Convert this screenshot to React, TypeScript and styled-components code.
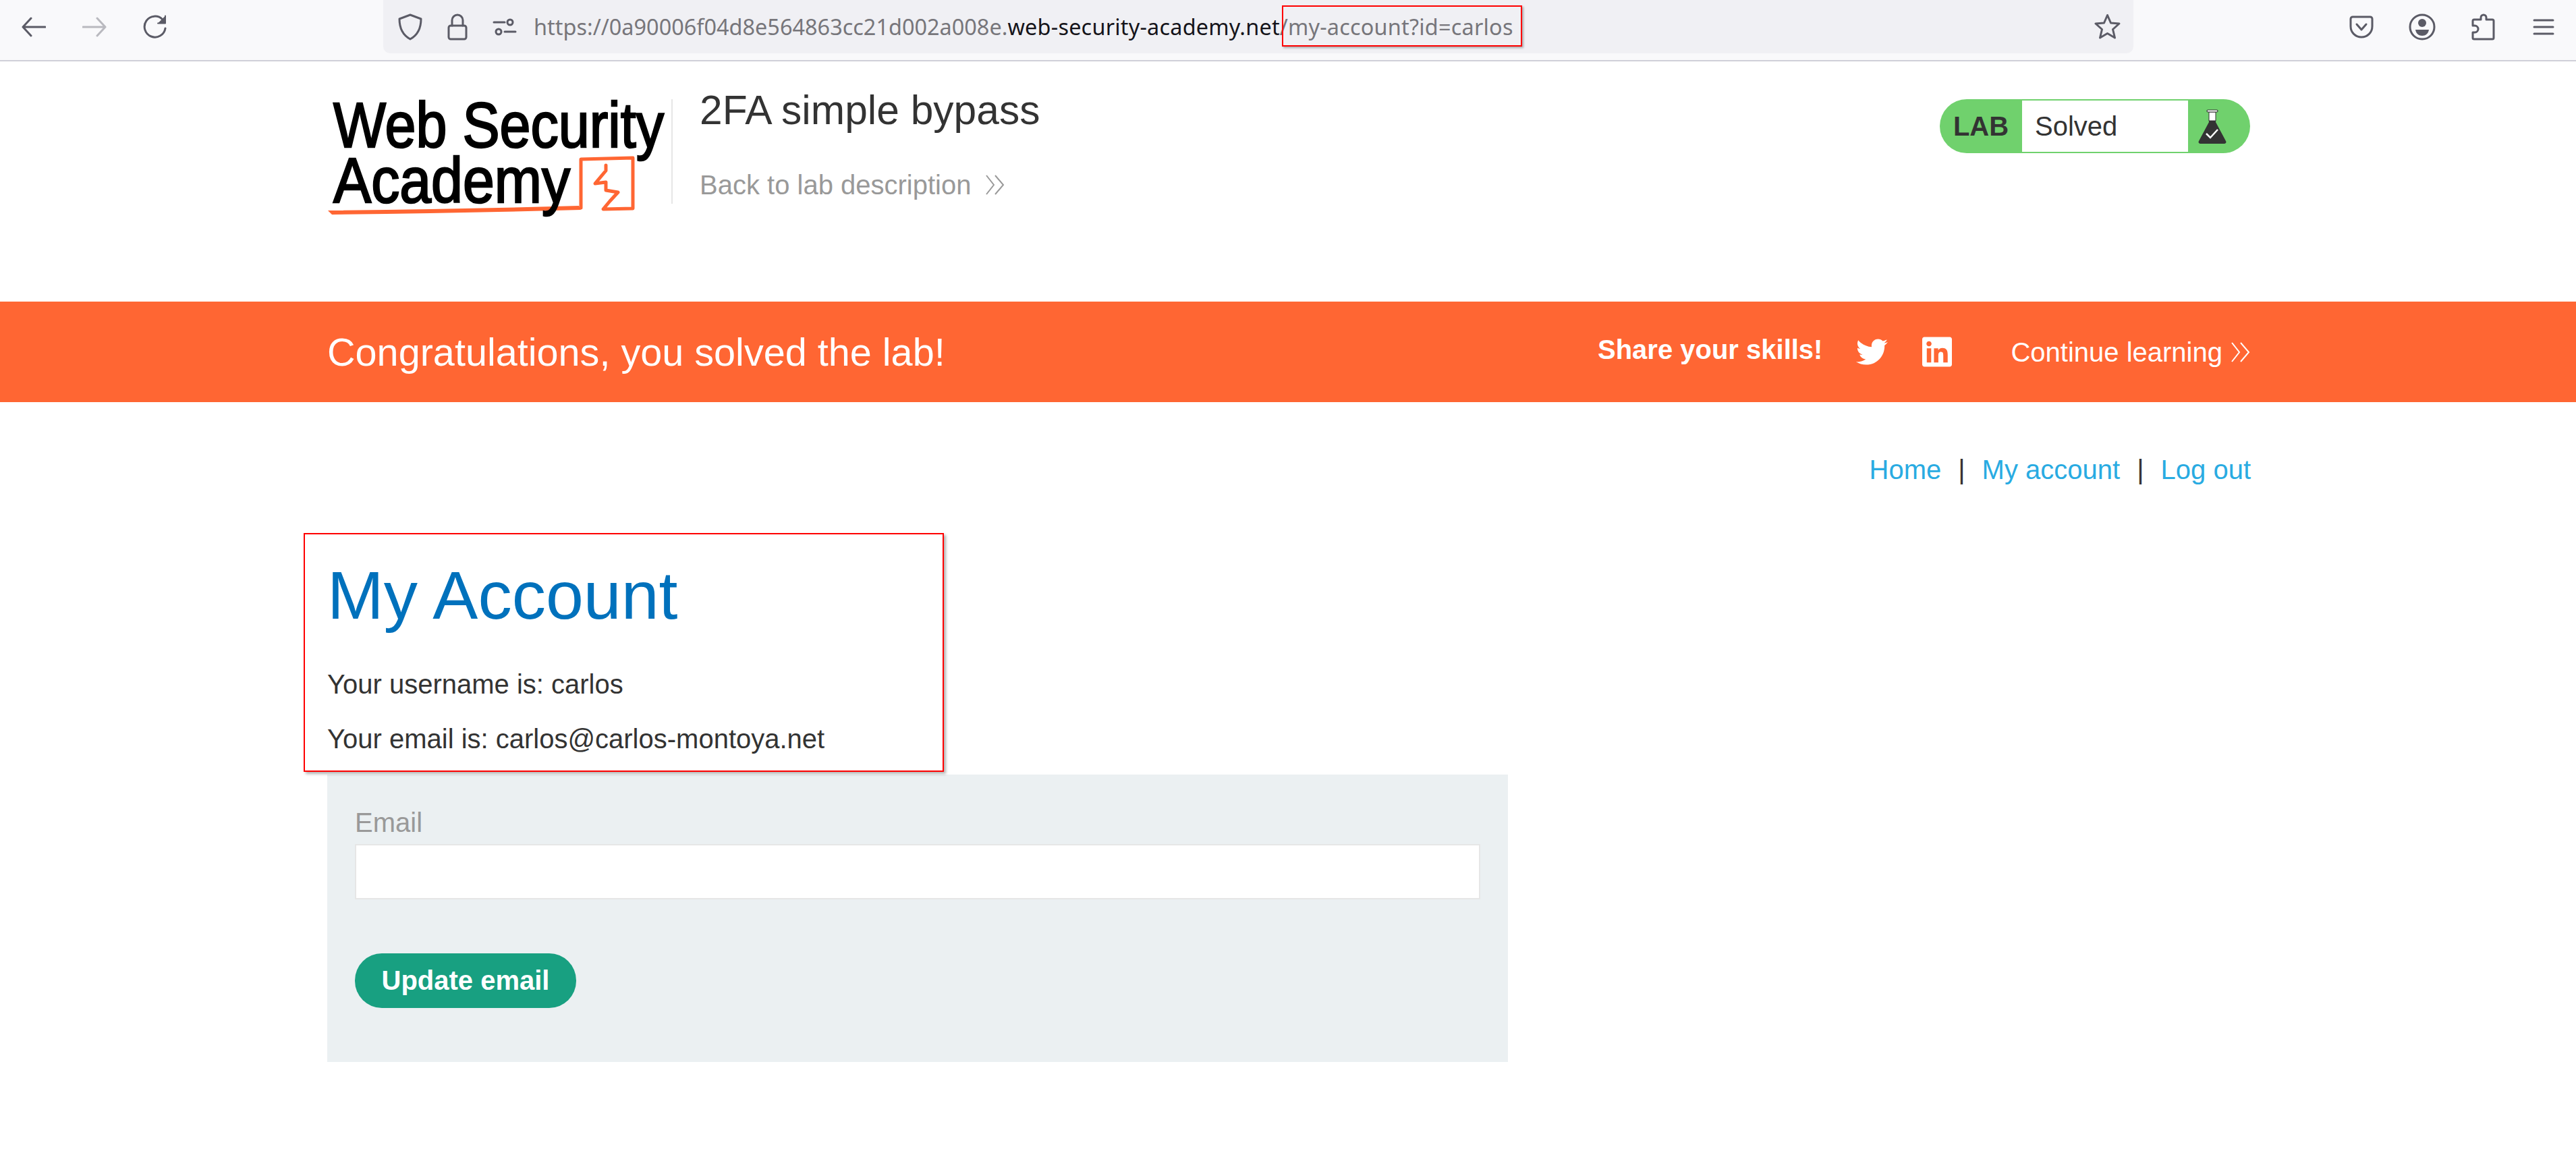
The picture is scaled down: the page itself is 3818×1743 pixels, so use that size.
import React from "react";
import styled, { createGlobalStyle } from "styled-components";
import { FaTwitter, FaLinkedin } from "react-icons/fa";

const GlobalStyle = createGlobalStyle`
  html, body {
    margin: 0;
    padding: 0;
    background: #fff;
    font-family: "Liberation Sans", Arial, sans-serif;
    font-size: 40px;
    line-height: 48px;
    color: #333;
  }
`;

const Toolbar = styled.div`
  height: 89px;
  background: #f9f9fb;
  border-bottom: 2px solid #cfcfd8;
  display: flex;
  align-items: flex-start;
  padding-left: 5px;
`;

const ToolGroup = styled.div`
  display: flex;
  height: 79px;
  align-items: center;
`;

const ToolButton = styled.div`
  width: 90px;
  height: 79px;
  display: flex;
  align-items: center;
  justify-content: center;
`;

const UrlBar = styled.div`
  width: 2594px;
  height: 79px;
  margin-left: 293px;
  margin-right: 293px;
  background: #f0f0f4;
  border-radius: 0 0 10px 10px;
  display: flex;
  align-items: center;
  padding-left: 22px;
  box-sizing: border-box;
`;

const UrlIcons = styled.div`
  display: flex;
  align-items: center;
  gap: 37px;
`;

const UrlText = styled.div`
  margin-left: 25px;
  font-family: "Noto Sans", sans-serif;
  font-size: 32.45px;
  line-height: 40px;
  color: #77767b;
  white-space: nowrap;
  flex: 1;
`;

const Domain = styled.span`
  color: #15141a;
  letter-spacing: 0.2px;
`;

const Highlighted = styled.span`
  position: relative;
  letter-spacing: 0.2px;
  &::after {
    content: "";
    position: absolute;
    left: -9px;
    right: -13px;
    top: -9px;
    bottom: -7px;
    border: 2.5px solid #f00;
    box-shadow: 2px 2px 3px rgba(0, 0, 0, 0.3);
  }
`;

const StarSlot = styled.div`
  width: 39px;
  height: 39px;
  margin-right: 19px;
`;

const LabHeader = styled.header`
  height: 356px;
  box-sizing: border-box;
  padding: 37px 483px 0 485px;
  display: flex;
  align-items: flex-start;
`;

const Logo = styled.svg`
  display: block;
  margin-top: 12px;
  flex-shrink: 0;
  overflow: visible;
`;

const LogoDivider = styled.div`
  width: 2px;
  height: 155px;
  margin: 19px 40px 0 5px;
  background: #e6e6e6;
`;

const LabTitle = styled.div`
  display: flex;
  flex-direction: column;
`;

const LabName = styled.h2`
  margin: 0 0 52px;
  font-size: 60.5px;
  line-height: 70px;
  font-weight: 400;
  color: #333;
`;

const BackLink = styled.a`
  display: flex;
  align-items: center;
  gap: 22px;
  color: #999;
`;

const StatusPill = styled.div`
  margin: 19px 0 0 auto;
  width: 460px;
  height: 80px;
  box-sizing: border-box;
  border-radius: 40px;
  background: #70d16d;
  display: flex;
  align-items: stretch;
  padding: 2px 0;
`;

const StatusLabel = styled.div`
  width: 122px;
  display: flex;
  align-items: center;
  justify-content: center;
  font-weight: 700;
`;

const StatusValue = styled.div`
  width: 246px;
  background: #fff;
  display: flex;
  align-items: center;
  padding-left: 19px;
  box-sizing: border-box;
`;

const StatusIcon = styled.div`
  flex: 1;
  display: flex;
  align-items: center;
  justify-content: center;
  padding-right: 20px;
`;

const Banner = styled.section`
  height: 149px;
  box-sizing: border-box;
  padding: 0 483px 0 485px;
  background: #ff6633;
  color: #fff;
  display: flex;
  align-items: center;
`;

const BannerTitle = styled.h4`
  margin: 0;
  font-size: 57.6px;
  line-height: 70px;
  font-weight: 400;
  flex: 1;
`;

const ShareLabel = styled.span`
  font-weight: 700;
  margin: 0 50px 8px 0;
`;

const ShareIcon = styled.a<{ $gap: number }>`
  display: flex;
  color: #fff;
  margin-right: ${(p) => p.$gap}px;
`;

const LinkedinGlyph = styled(FaLinkedin)`
  width: 44px;
  height: 51px;
`;

const ContinueLink = styled.a`
  display: flex;
  align-items: center;
  gap: 13px;
  color: #fff;
`;

const TopNav = styled.nav`
  margin: 76px 482px 0 485px;
  display: flex;
  justify-content: flex-end;
`;

const NavLink = styled.a`
  color: #29abe2;
`;

const NavSep = styled.span`
  margin: 0 25px;
  color: #333;
`;

const Main = styled.main`
  position: relative;
  margin: 0 483px 0 485px;
  padding-top: 102px;
`;

const Heading = styled.h1`
  margin: 0 0 48px;
  font-size: 100.5px;
  line-height: 120px;
  font-weight: 400;
  color: #0071bc;
`;

const InfoLine = styled.p<{ $space: number }>`
  margin: 0 0 ${(p) => p.$space}px;
`;

const CalloutBox = styled.div`
  position: absolute;
  left: -35px;
  top: 70px;
  width: 949px;
  height: 354px;
  box-sizing: border-box;
  border: 2.5px solid #f00;
  box-shadow: 3px 3px 4px rgba(0, 0, 0, 0.3);
`;

const EmailForm = styled.form`
  width: 1750px;
  height: 426px;
  box-sizing: border-box;
  padding: 47px 41px 0;
  background: #ebf0f2;
`;

const FieldLabel = styled.label`
  display: block;
  color: #999;
  margin-bottom: 8px;
`;

const TextField = styled.input`
  display: block;
  width: 100%;
  height: 82px;
  box-sizing: border-box;
  border: 2px solid #e6e6e6;
  background: #fff;
  margin-bottom: 80px;
`;

const SubmitButton = styled.button`
  display: block;
  width: 328px;
  height: 81px;
  border: 0;
  border-radius: 40px;
  background: #18a081;
  color: #fff;
  font-family: inherit;
  font-size: 40px;
  font-weight: 700;
  padding: 0;
`;

const Ico = ({ w, h, children, sw = 3, color = "#5b5b66" }: { w: number; h: number; children: React.ReactNode; sw?: number; color?: string }) => (
  <svg width={w} height={h} viewBox={`0 0 ${w} ${h}`} fill="none" stroke={color} strokeWidth={sw} strokeLinecap="round" strokeLinejoin="round">
    {children}
  </svg>
);

const DoubleChevron = ({ color, sw = 2 }: { color: string; sw?: number }) => (
  <svg width="28" height="30" viewBox="0 0 28 30" fill="none" stroke={color} strokeWidth={sw}>
    <polyline points="1,1 12,15 1,29" />
    <polyline points="14,1 26,15 14,29" />
  </svg>
);

const App = () => (
  <>
    <GlobalStyle />
    <Toolbar>
      <ToolGroup>
        <ToolButton>
          <Ico w={36} h={30}>
            <path d="M14 2 2 15l12 13M2 15h33" />
          </Ico>
        </ToolButton>
        <ToolButton>
          <Ico w={36} h={30} color="#b9b9bf">
            <path d="M22 2l12 13-12 13M34 15H1" />
          </Ico>
        </ToolButton>
        <ToolButton>
          <Ico w={36} h={36}>
            <path d="M33 20a15.5 15.5 0 1 1-4-13" />
            <path d="M33 1.5v11H22" fill="#5b5b66" strokeWidth={2} />
          </Ico>
        </ToolButton>
      </ToolGroup>
      <UrlBar>
        <UrlIcons>
          <Ico w={36} h={40}>
            <path d="M18 2 34 8c0 14-5 24-16 30C7 32 2 22 2 8z" />
          </Ico>
          <Ico w={30} h={40}>
            <rect x="2" y="18" width="26" height="20" rx="3" />
            <path d="M7 18V10a8 8 0 0 1 16 0v8" />
          </Ico>
          <Ico w={36} h={26}>
            <circle cx="26" cy="6" r="4" />
            <path d="M2 6h16M18 20h16" />
            <circle cx="9" cy="20" r="4" />
          </Ico>
        </UrlIcons>
        <UrlText>
          https://0a90006f04d8e564863cc21d002a008e.<Domain>web-security-academy.net</Domain>/
          <Highlighted>my-account?id=carlos</Highlighted>
        </UrlText>
        <StarSlot>
          <Ico w={39} h={39}>
            <path d="M19.5 2.5l5 11.5 12.5 1-9.5 8.5 3 12.5-11-6.5-11 6.5 3-12.5L2 15l12.5-1z" />
          </Ico>
        </StarSlot>
      </UrlBar>
      <ToolGroup>
        <ToolButton>
          <Ico w={36} h={34}>
            <path d="M5 2h26a3 3 0 0 1 3 3v11c0 9-7 16-16 16S2 25 2 16V5a3 3 0 0 1 3-3z" />
            <path d="M11 13l7 8 7-8" />
          </Ico>
        </ToolButton>
        <ToolButton>
          <Ico w={40} h={40}>
            <circle cx="20" cy="20" r="18" />
            <circle cx="20" cy="14" r="6" fill="#5b5b66" stroke="none" />
            <path d="M10 24h20c-1 6-5 9-10 9s-9-3-10-9z" fill="#5b5b66" stroke="none" />
          </Ico>
        </ToolButton>
        <ToolButton>
          <Ico w={36} h={40}>
            <path d="M15 9V6a4 4 0 0 1 8 0v3h9a2 2 0 0 1 2 2v25a2 2 0 0 1-2 2H5a2 2 0 0 1-2-2v-8h3a5 5 0 0 0 0-10H3v-7a2 2 0 0 1 2-2z" />
          </Ico>
        </ToolButton>
        <ToolButton>
          <Ico w={32} h={26}>
            <path d="M2 3h28M2 13h28M2 23h28" />
          </Ico>
        </ToolButton>
      </ToolGroup>
    </Toolbar>

    <LabHeader>
      <Logo width="505" height="185" viewBox="485 140 505 185">
        <path d="M486 312 Q680 310 858 305 L861 311 Q680 316 492 318 Z" fill="#ff6633" />
        <path
          d="M861 308 L861 236 L938 234 L938 309 L894 310 L904 298 L916 285 L898 282 L898 270 L882 272 L898 253 L898 245"
          fill="none"
          stroke="#ff6633"
          strokeWidth="5"
          strokeLinejoin="round"
          strokeLinecap="round"
        />
        <g fontFamily="Liberation Sans" fontSize="95" fill="#000" stroke="#000" strokeWidth="2.5">
          <text x="494" y="218" textLength="490" lengthAdjust="spacingAndGlyphs">Web Security</text>
          <text x="494" y="300" textLength="351" lengthAdjust="spacingAndGlyphs">Academy</text>
        </g>
      </Logo>
      <LogoDivider />
      <LabTitle>
        <LabName>2FA simple bypass</LabName>
        <BackLink>
          Back to lab description
          <DoubleChevron color="#999" />
        </BackLink>
      </LabTitle>
      <StatusPill>
        <StatusLabel>LAB</StatusLabel>
        <StatusValue>Solved</StatusValue>
        <StatusIcon>
          <svg width="42" height="52" viewBox="0 0 42 52">
            <path d="M16 6h10v14l15 28a2.5 2.5 0 0 1-2 4H3a2.5 2.5 0 0 1-2-4L16 20z" fill="#333" />
            <rect x="16" y="5" width="10" height="13" fill="#fff" stroke="#333" strokeWidth="1" />
            <rect x="13" y="2" width="16" height="3" rx="1.5" fill="#fff" stroke="#333" strokeWidth="1.2" />
            <path d="M12 37l6 6 11-12" fill="none" stroke="#fff" strokeWidth="2.5" />
          </svg>
        </StatusIcon>
      </StatusPill>
    </LabHeader>

    <Banner>
      <BannerTitle>Congratulations, you solved the lab!</BannerTitle>
      <ShareLabel>Share your skills!</ShareLabel>
      <ShareIcon $gap={51}>
        <FaTwitter size={47} />
      </ShareIcon>
      <ShareIcon $gap={87}>
        <LinkedinGlyph />
      </ShareIcon>
      <ContinueLink>
        Continue learning
        <DoubleChevron color="#fff" />
      </ContinueLink>
    </Banner>

    <TopNav>
      <NavLink>Home</NavLink>
      <NavSep>|</NavSep>
      <NavLink>My account</NavLink>
      <NavSep>|</NavSep>
      <NavLink>Log out</NavLink>
    </TopNav>

    <Main>
      <Heading>My Account</Heading>
      <InfoLine $space={33}>Your username is: carlos</InfoLine>
      <InfoLine $space={29}>Your email is: carlos@carlos-montoya.net</InfoLine>
      <CalloutBox />
      <EmailForm>
        <FieldLabel>Email</FieldLabel>
        <TextField type="email" />
        <SubmitButton type="button">Update email</SubmitButton>
      </EmailForm>
    </Main>
  </>
);

export default App;
